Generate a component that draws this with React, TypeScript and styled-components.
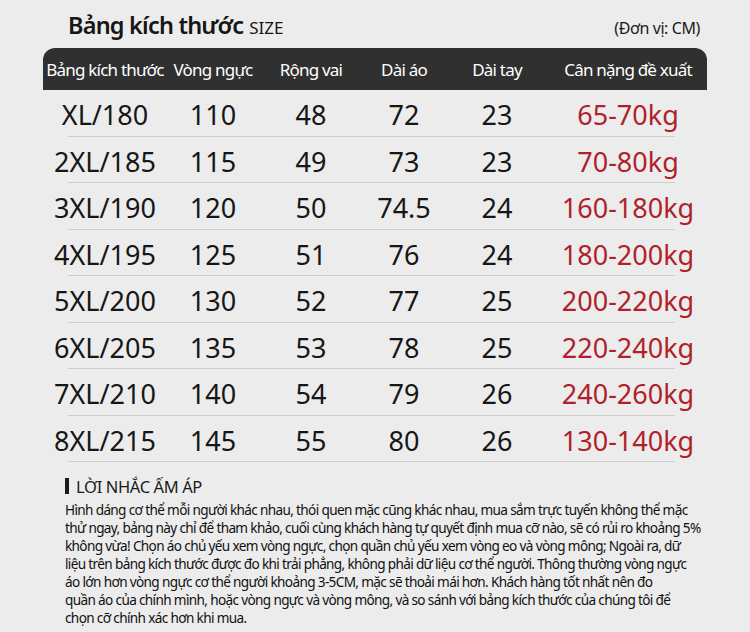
import styled, { createGlobalStyle } from "styled-components";

const GlobalStyle = createGlobalStyle`
  html, body {
    margin: 0;
    padding: 0;
    background: #ececec;
  }
  body {
    font-family: "Noto Sans", "Open Sans", sans-serif;
    color: #151515;
  }
`;

const Page = styled.div`
  width: 750px;
  height: 632px;
  overflow: hidden;
  background: #ececec;
  padding: 0 43px;
  box-sizing: border-box;
`;

const TitleRow = styled.div`
  display: flex;
  align-items: baseline;
  justify-content: space-between;
  height: 48px;
  padding: 10px 7px 0 25px;
  box-sizing: border-box;
`;

const Title = styled.h1`
  margin: 0;
  font-size: 23.5px;
  font-weight: 600;
  letter-spacing: -0.8px;
  line-height: 30px;
  color: #161616;
`;

const TitleSub = styled.span`
  font-size: 17px;
  font-weight: 400;
  margin-left: 6px;
  letter-spacing: 0;
`;

const Unit = styled.span`
  font-size: 16px;
  letter-spacing: -0.4px;
  color: #1a1a1a;
`;

const Table = styled.div`
  width: 664px;
`;

const columns = "124px 92px 104px 82px 104px 158px";

const HeaderBar = styled.div`
  display: grid;
  grid-template-columns: ${columns};
  align-items: center;
  height: 42px;
  background: #303030;
  border-radius: 12px 12px 0 0;
  color: #ffffff;
`;

const HeaderCell = styled.div`
  text-align: center;
  font-size: 17px;
  letter-spacing: -0.8px;
  white-space: nowrap;
`;

const Row = styled.div`
  display: grid;
  grid-template-columns: ${columns};
  align-items: center;
  height: 46.5px;
  padding-top: 3px;
  box-sizing: border-box;
  background: linear-gradient(#cdcdcd, #cdcdcd) no-repeat 25px 100% / 607px 1px;
`;

const Cell = styled.div<{ $accent?: boolean }>`
  text-align: center;
  font-size: 27px;
  white-space: nowrap;
  color: ${(p) => (p.$accent ? "#b01f2a" : "#161616")};
`;

const Notes = styled.div`
  margin-top: 13px;
  padding-left: 22px;
`;

const NotesTitle = styled.div`
  display: flex;
  align-items: center;
  gap: 7px;
  font-size: 16.5px;
  letter-spacing: -0.4px;
  color: #1a1a1a;
  height: 22px;
`;

const Bar = styled.span`
  display: block;
  width: 4px;
  height: 16px;
  background: #1a1a1a;
`;

const Paragraph = styled.div`
  margin-top: 4px;
  font-size: 13.6px;
  letter-spacing: -0.65px;
  line-height: 18px;
  color: #111111;
`;

const Line = styled.div`
  white-space: nowrap;
`;

const headers = [
  "Bảng kích thước",
  "Vòng ngực",
  "Rộng vai",
  "Dài áo",
  "Dài tay",
  "Cân nặng đề xuất",
];

const rows = [
  ["XL/180", "110", "48", "72", "23", "65-70kg"],
  ["2XL/185", "115", "49", "73", "23", "70-80kg"],
  ["3XL/190", "120", "50", "74.5", "24", "160-180kg"],
  ["4XL/195", "125", "51", "76", "24", "180-200kg"],
  ["5XL/200", "130", "52", "77", "25", "200-220kg"],
  ["6XL/205", "135", "53", "78", "25", "220-240kg"],
  ["7XL/210", "140", "54", "79", "26", "240-260kg"],
  ["8XL/215", "145", "55", "80", "26", "130-140kg"],
];

const noteLines = [
  "Hình dáng cơ thể mỗi người khác nhau, thói quen mặc cũng khác nhau, mua sắm trực tuyến không thể mặc",
  "thử ngay, bảng này chỉ để tham khảo, cuối cùng khách hàng tự quyết định mua cỡ nào, sẽ có rủi ro khoảng 5%",
  "không vừa! Chọn áo chủ yếu xem vòng ngực, chọn quần chủ yếu xem vòng eo và vòng mông; Ngoài ra, dữ",
  "liệu trên bảng kích thước được đo khi trải phẳng, không phải dữ liệu cơ thể người. Thông thường vòng ngực",
  "áo lớn hơn vòng ngực cơ thể người khoảng 3-5CM, mặc sẽ thoải mái hơn. Khách hàng tốt nhất nên đo",
  "quần áo của chính mình, hoặc vòng ngực và vòng mông, và so sánh với bảng kích thước của chúng tôi để",
  "chọn cỡ chính xác hơn khi mua.",
];

export default function App() {
  return (
    <>
      <GlobalStyle />
      <Page>
        <TitleRow>
          <Title>
            Bảng kích thước<TitleSub>SIZE</TitleSub>
          </Title>
          <Unit>(Đơn vị: CM)</Unit>
        </TitleRow>
        <Table>
          <HeaderBar>
            {headers.map((h) => (
              <HeaderCell key={h}>{h}</HeaderCell>
            ))}
          </HeaderBar>
          {rows.map((row) => (
            <Row key={row[0]}>
              {row.map((value, i) => (
                <Cell key={i} $accent={i === 5}>
                  {value}
                </Cell>
              ))}
            </Row>
          ))}
        </Table>
        <Notes>
          <NotesTitle>
            <Bar />
            LỜI NHẮC ẤM ÁP
          </NotesTitle>
          <Paragraph>
            {noteLines.map((line) => (
              <Line key={line}>{line}</Line>
            ))}
          </Paragraph>
        </Notes>
      </Page>
    </>
  );
}
